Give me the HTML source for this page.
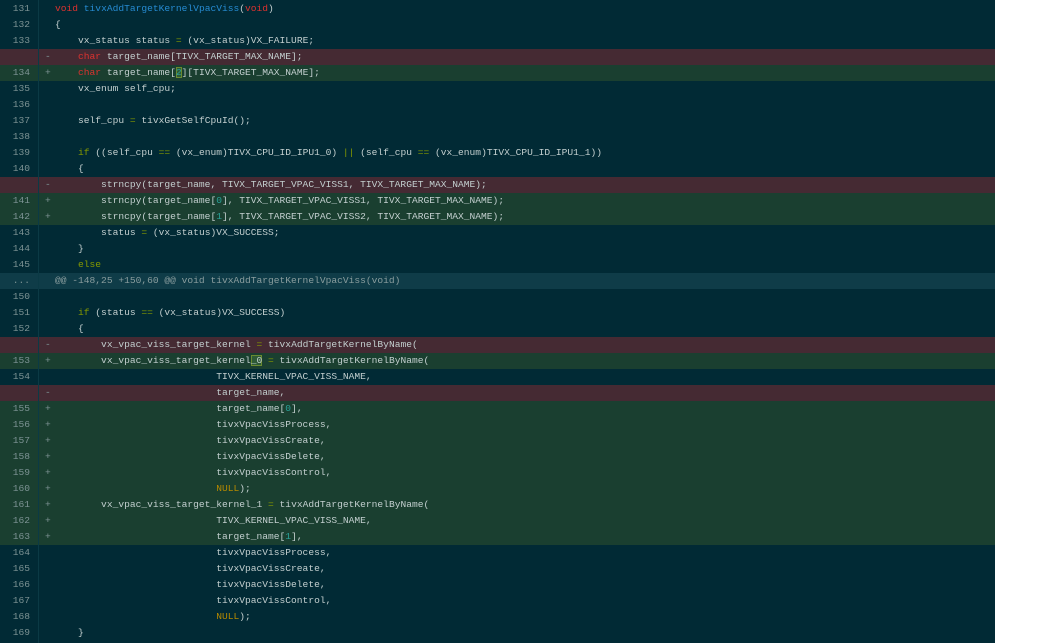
<!DOCTYPE html>
<html><head><meta charset="utf-8"><style>
body{margin:0;background:#fff;width:1060px;height:643px;overflow:hidden}
#p{position:absolute;left:0;top:0;width:995px;height:643px;background:#012a35}
.r{position:absolute;left:0;width:995px;height:16px;line-height:16px;font-family:"Liberation Mono","DejaVu Sans Mono",monospace;font-size:9.6px;color:#c3cfcf;white-space:pre}
.n{position:absolute;left:0;width:30px;text-align:right;color:#7d9394}
.s{position:absolute;left:45px;color:#7d9394}
.c{position:absolute;left:55px}
.d{background:#452a33}.a{background:#1a3f30}.h{background:#0f3c48;color:#8a9d9e}
.k{color:#dc322f}.f{color:#268bd2}.g{color:#859900}.m{color:#2aa198}.y{color:#b58900}
.x{background:#2e5a36;box-shadow:inset 0 0 0 1px #6a8a30}
#l{position:absolute;left:38px;top:0;width:1px;height:643px;background:#0b3a45}
</style></head><body><div id="p"></div>
<div class="r" style="top:1px"><span class="n">131</span><span class="c"><span class="k">void</span> <span class="f">tivxAddTargetKernelVpacViss</span>(<span class="k">void</span>)</span></div>
<div class="r" style="top:17px"><span class="n">132</span><span class="c">{</span></div>
<div class="r" style="top:33px"><span class="n">133</span><span class="c">    vx_status status <span class="g">=</span> (vx_status)VX_FAILURE;</span></div>
<div class="r d" style="top:49px"><span class="s">-</span><span class="c">    <span class="k">char</span> target_name[TIVX_TARGET_MAX_NAME];</span></div>
<div class="r a" style="top:65px"><span class="n">134</span><span class="s">+</span><span class="c">    <span class="k">char</span> target_name[<span class="m x">2</span>][TIVX_TARGET_MAX_NAME];</span></div>
<div class="r" style="top:81px"><span class="n">135</span><span class="c">    vx_enum self_cpu;</span></div>
<div class="r" style="top:97px"><span class="n">136</span></div>
<div class="r" style="top:113px"><span class="n">137</span><span class="c">    self_cpu <span class="g">=</span> tivxGetSelfCpuId();</span></div>
<div class="r" style="top:129px"><span class="n">138</span></div>
<div class="r" style="top:145px"><span class="n">139</span><span class="c">    <span class="g">if</span> ((self_cpu <span class="g">==</span> (vx_enum)TIVX_CPU_ID_IPU1_0) <span class="g">||</span> (self_cpu <span class="g">==</span> (vx_enum)TIVX_CPU_ID_IPU1_1))</span></div>
<div class="r" style="top:161px"><span class="n">140</span><span class="c">    {</span></div>
<div class="r d" style="top:177px"><span class="s">-</span><span class="c">        strncpy(target_name, TIVX_TARGET_VPAC_VISS1, TIVX_TARGET_MAX_NAME);</span></div>
<div class="r a" style="top:193px"><span class="n">141</span><span class="s">+</span><span class="c">        strncpy(target_name[<span class="m">0</span>], TIVX_TARGET_VPAC_VISS1, TIVX_TARGET_MAX_NAME);</span></div>
<div class="r a" style="top:209px"><span class="n">142</span><span class="s">+</span><span class="c">        strncpy(target_name[<span class="m">1</span>], TIVX_TARGET_VPAC_VISS2, TIVX_TARGET_MAX_NAME);</span></div>
<div class="r" style="top:225px"><span class="n">143</span><span class="c">        status <span class="g">=</span> (vx_status)VX_SUCCESS;</span></div>
<div class="r" style="top:241px"><span class="n">144</span><span class="c">    }</span></div>
<div class="r" style="top:257px"><span class="n">145</span><span class="c">    <span class="g">else</span></span></div>
<div class="r h" style="top:273px"><span class="n">...</span><span class="c">@@ -148,25 +150,60 @@ void tivxAddTargetKernelVpacViss(void)</span></div>
<div class="r" style="top:289px"><span class="n">150</span></div>
<div class="r" style="top:305px"><span class="n">151</span><span class="c">    <span class="g">if</span> (status <span class="g">==</span> (vx_status)VX_SUCCESS)</span></div>
<div class="r" style="top:321px"><span class="n">152</span><span class="c">    {</span></div>
<div class="r d" style="top:337px"><span class="s">-</span><span class="c">        vx_vpac_viss_target_kernel <span class="g">=</span> tivxAddTargetKernelByName(</span></div>
<div class="r a" style="top:353px"><span class="n">153</span><span class="s">+</span><span class="c">        vx_vpac_viss_target_kernel<span class="x">_0</span> <span class="g">=</span> tivxAddTargetKernelByName(</span></div>
<div class="r" style="top:369px"><span class="n">154</span><span class="c">                            TIVX_KERNEL_VPAC_VISS_NAME,</span></div>
<div class="r d" style="top:385px"><span class="s">-</span><span class="c">                            target_name,</span></div>
<div class="r a" style="top:401px"><span class="n">155</span><span class="s">+</span><span class="c">                            target_name[<span class="m">0</span>],</span></div>
<div class="r a" style="top:417px"><span class="n">156</span><span class="s">+</span><span class="c">                            tivxVpacVissProcess,</span></div>
<div class="r a" style="top:433px"><span class="n">157</span><span class="s">+</span><span class="c">                            tivxVpacVissCreate,</span></div>
<div class="r a" style="top:449px"><span class="n">158</span><span class="s">+</span><span class="c">                            tivxVpacVissDelete,</span></div>
<div class="r a" style="top:465px"><span class="n">159</span><span class="s">+</span><span class="c">                            tivxVpacVissControl,</span></div>
<div class="r a" style="top:481px"><span class="n">160</span><span class="s">+</span><span class="c">                            <span class="y">NULL</span>);</span></div>
<div class="r a" style="top:497px"><span class="n">161</span><span class="s">+</span><span class="c">        vx_vpac_viss_target_kernel_1 <span class="g">=</span> tivxAddTargetKernelByName(</span></div>
<div class="r a" style="top:513px"><span class="n">162</span><span class="s">+</span><span class="c">                            TIVX_KERNEL_VPAC_VISS_NAME,</span></div>
<div class="r a" style="top:529px"><span class="n">163</span><span class="s">+</span><span class="c">                            target_name[<span class="m">1</span>],</span></div>
<div class="r" style="top:545px"><span class="n">164</span><span class="c">                            tivxVpacVissProcess,</span></div>
<div class="r" style="top:561px"><span class="n">165</span><span class="c">                            tivxVpacVissCreate,</span></div>
<div class="r" style="top:577px"><span class="n">166</span><span class="c">                            tivxVpacVissDelete,</span></div>
<div class="r" style="top:593px"><span class="n">167</span><span class="c">                            tivxVpacVissControl,</span></div>
<div class="r" style="top:609px"><span class="n">168</span><span class="c">                            <span class="y">NULL</span>);</span></div>
<div class="r" style="top:625px"><span class="n">169</span><span class="c">    }</span></div>
<div id="l"></div>
</body></html>
